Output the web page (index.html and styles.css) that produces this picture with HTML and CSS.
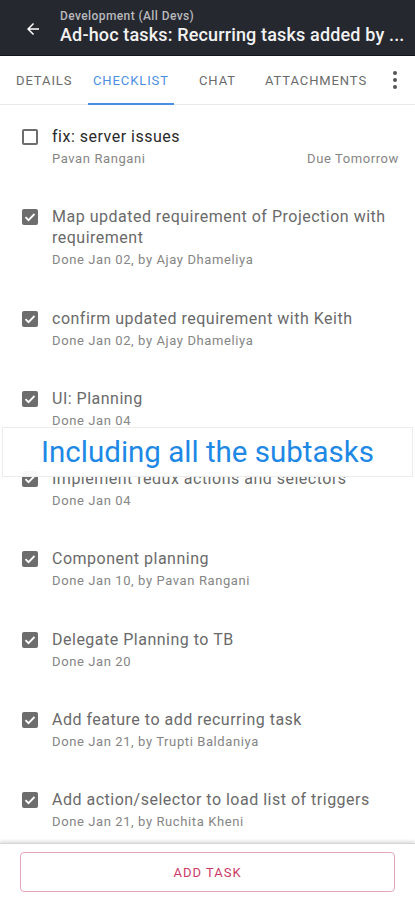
FILE: index.html
```html
<!DOCTYPE html>
<html>
<head>
<meta charset="utf-8">
<link rel="stylesheet" href="styles.css">
</head>
<body>
<div class="app">
  <header class="topbar">
    <svg class="back" width="18" height="18" viewBox="0 0 24 24"><path d="M20 11H7.83l5.59-5.59L12 4l-8 8 8 8 1.41-1.41L7.83 13H20v-2z" fill="#fff"/></svg>
    <div class="titles">
      <div class="subtitle">Development (All Devs)</div>
      <div class="title">Ad-hoc tasks: Recurring tasks added by ...</div>
    </div>
  </header>
  <nav class="tabs">
    <div class="tab">DETAILS</div>
    <div class="tab active">CHECKLIST</div>
    <div class="tab">CHAT</div>
    <div class="tab">ATTACHMENTS</div>
    <div class="more"><span></span><span></span><span></span></div>
  </nav>
  <main class="list">
    <div class="item">
      <span class="box"></span>
      <div class="body">
        <div class="text open">fix: server issues</div>
        <div class="meta"><span>Pavan Rangani</span><span>Due Tomorrow</span></div>
      </div>
    </div>
    <div class="item">
      <span class="box checked"><svg viewBox="0 0 16 16"><path d="M3.5 8.2l3 3 6-6.2" fill="none" stroke="#fff" stroke-width="1.8"/></svg></span>
      <div class="body">
        <div class="text">Map updated requirement of Projection with requirement</div>
        <div class="meta"><span>Done Jan 02, by Ajay Dhameliya</span></div>
      </div>
    </div>
    <div class="item">
      <span class="box checked"><svg viewBox="0 0 16 16"><path d="M3.5 8.2l3 3 6-6.2" fill="none" stroke="#fff" stroke-width="1.8"/></svg></span>
      <div class="body">
        <div class="text">confirm updated requirement with Keith</div>
        <div class="meta"><span>Done Jan 02, by Ajay Dhameliya</span></div>
      </div>
    </div>
    <div class="item">
      <span class="box checked"><svg viewBox="0 0 16 16"><path d="M3.5 8.2l3 3 6-6.2" fill="none" stroke="#fff" stroke-width="1.8"/></svg></span>
      <div class="body">
        <div class="text">UI: Planning</div>
        <div class="meta"><span>Done Jan 04</span></div>
      </div>
    </div>
    <div class="item">
      <span class="box checked"><svg viewBox="0 0 16 16"><path d="M3.5 8.2l3 3 6-6.2" fill="none" stroke="#fff" stroke-width="1.8"/></svg></span>
      <div class="body">
        <div class="text">Implement redux actions and selectors</div>
        <div class="meta"><span>Done Jan 04</span></div>
      </div>
    </div>
    <div class="item">
      <span class="box checked"><svg viewBox="0 0 16 16"><path d="M3.5 8.2l3 3 6-6.2" fill="none" stroke="#fff" stroke-width="1.8"/></svg></span>
      <div class="body">
        <div class="text">Component planning</div>
        <div class="meta"><span>Done Jan 10, by Pavan Rangani</span></div>
      </div>
    </div>
    <div class="item">
      <span class="box checked"><svg viewBox="0 0 16 16"><path d="M3.5 8.2l3 3 6-6.2" fill="none" stroke="#fff" stroke-width="1.8"/></svg></span>
      <div class="body">
        <div class="text">Delegate Planning to TB</div>
        <div class="meta"><span>Done Jan 20</span></div>
      </div>
    </div>
    <div class="item">
      <span class="box checked"><svg viewBox="0 0 16 16"><path d="M3.5 8.2l3 3 6-6.2" fill="none" stroke="#fff" stroke-width="1.8"/></svg></span>
      <div class="body">
        <div class="text">Add feature to add recurring task</div>
        <div class="meta"><span>Done Jan 21, by Trupti Baldaniya</span></div>
      </div>
    </div>
    <div class="item">
      <span class="box checked"><svg viewBox="0 0 16 16"><path d="M3.5 8.2l3 3 6-6.2" fill="none" stroke="#fff" stroke-width="1.8"/></svg></span>
      <div class="body">
        <div class="text">Add action/selector to load list of triggers</div>
        <div class="meta"><span>Done Jan 21, by Ruchita Kheni</span></div>
      </div>
    </div>
  </main>
  <footer class="footer">
    <button class="add">ADD TASK</button>
  </footer>
  <div class="banner">Including all the subtasks</div>
</div>
</body>
</html>
```

FILE: styles.css
```css
* { box-sizing: border-box; }
html, body { margin: 0; padding: 0; background: #fff; }
body { font-family: Roboto, "Noto Sans", sans-serif; }
.app {
  position: relative;
  width: 415px;
  height: 900px;
  display: flex;
  flex-direction: column;
  overflow: hidden;
}
.topbar {
  height: 56px;
  flex: none;
  background: #262830;
  border-bottom: 1px solid #15161a;
  display: flex;
  align-items: center;
  padding-left: 24px;
  gap: 18px;
}
.back { flex: none; margin-top: 2px; }
.titles { display: flex; flex-direction: column; min-width: 0; }
.subtitle { color: #b8b9bd; font-size: 12px; font-weight: 500; line-height: 15px; letter-spacing: 0.4px; }
.title { color: #f2f2f2; font-size: 18px; font-weight: 500; line-height: 22px; white-space: nowrap; letter-spacing: 0.15px; }
.tabs {
  height: 49px;
  flex: none;
  display: flex;
  align-items: center;
  border-bottom: 1px solid #e8e8e8;
  padding-left: 16px;
  position: relative;
}
.tab {
  font-size: 13px;
  letter-spacing: 0.9px;
  color: #6b6b6b;
  height: 100%;
  display: flex;
  align-items: center;
  position: relative;
}
.tab:nth-child(1) { width: 77px; }
.tab:nth-child(2) { width: 106px; }
.tab:nth-child(3) { width: 66px; }
.tab:nth-child(4) { width: 120px; }
.tab.active { color: #4a90e2; }
.tab.active::after {
  content: "";
  position: absolute;
  left: -5px;
  width: 86px;
  bottom: -1px;
  height: 2px;
  background: #4a90e2;
}
.more { display: flex; flex-direction: column; gap: 3px; margin-left: 8px; }
.more span { width: 4px; height: 4px; border-radius: 50%; background: #555; }
.list {
  flex: 1;
  overflow: hidden;
  padding: 21px 16px 0 22px;
}
.item { display: flex; gap: 14px; margin-bottom: 38.3px; }
.box {
  flex: none;
  width: 16px;
  height: 16px;
  margin-top: 3px;
  border: 2px solid #6d6d6d;
  border-radius: 2px;
  display: flex;
}
.box.checked { background: #6d6d6d; border: none; }
.box svg { width: 16px; height: 16px; }
.body { flex: 1; min-width: 0; }
.text { font-size: 16px; line-height: 21px; color: #6a6a6a; letter-spacing: 0.5px; margin-bottom: 2px; }
.text.open { color: #2a2a2a; }
.meta {
  display: flex;
  justify-content: space-between;
  font-size: 13px;
  line-height: 19px;
  color: #858585;
  letter-spacing: 0.6px;
}
.footer {
  flex: none;
  height: 57px;
  border-top: 1px solid #d6d6d6;
  box-shadow: 0 -2px 3px rgba(0,0,0,0.12);
  display: flex;
  align-items: center;
  padding: 0 20px;
  background: #fff;
}
.add {
  width: 100%;
  height: 40px;
  border: 1px solid #e6a4b8;
  border-radius: 4px;
  background: #fff;
  color: #cc3b68;
  font-family: Roboto, sans-serif;
  font-size: 13px;
  letter-spacing: 1px;
}
.banner {
  position: absolute;
  left: 2px;
  right: 2px;
  top: 427px;
  height: 50px;
  background: rgba(255,255,255,0.96);
  border: 1px solid #ececec;
  color: #1e88e5;
  font-size: 29.5px;
  display: flex;
  align-items: center;
  justify-content: center;
}
```
